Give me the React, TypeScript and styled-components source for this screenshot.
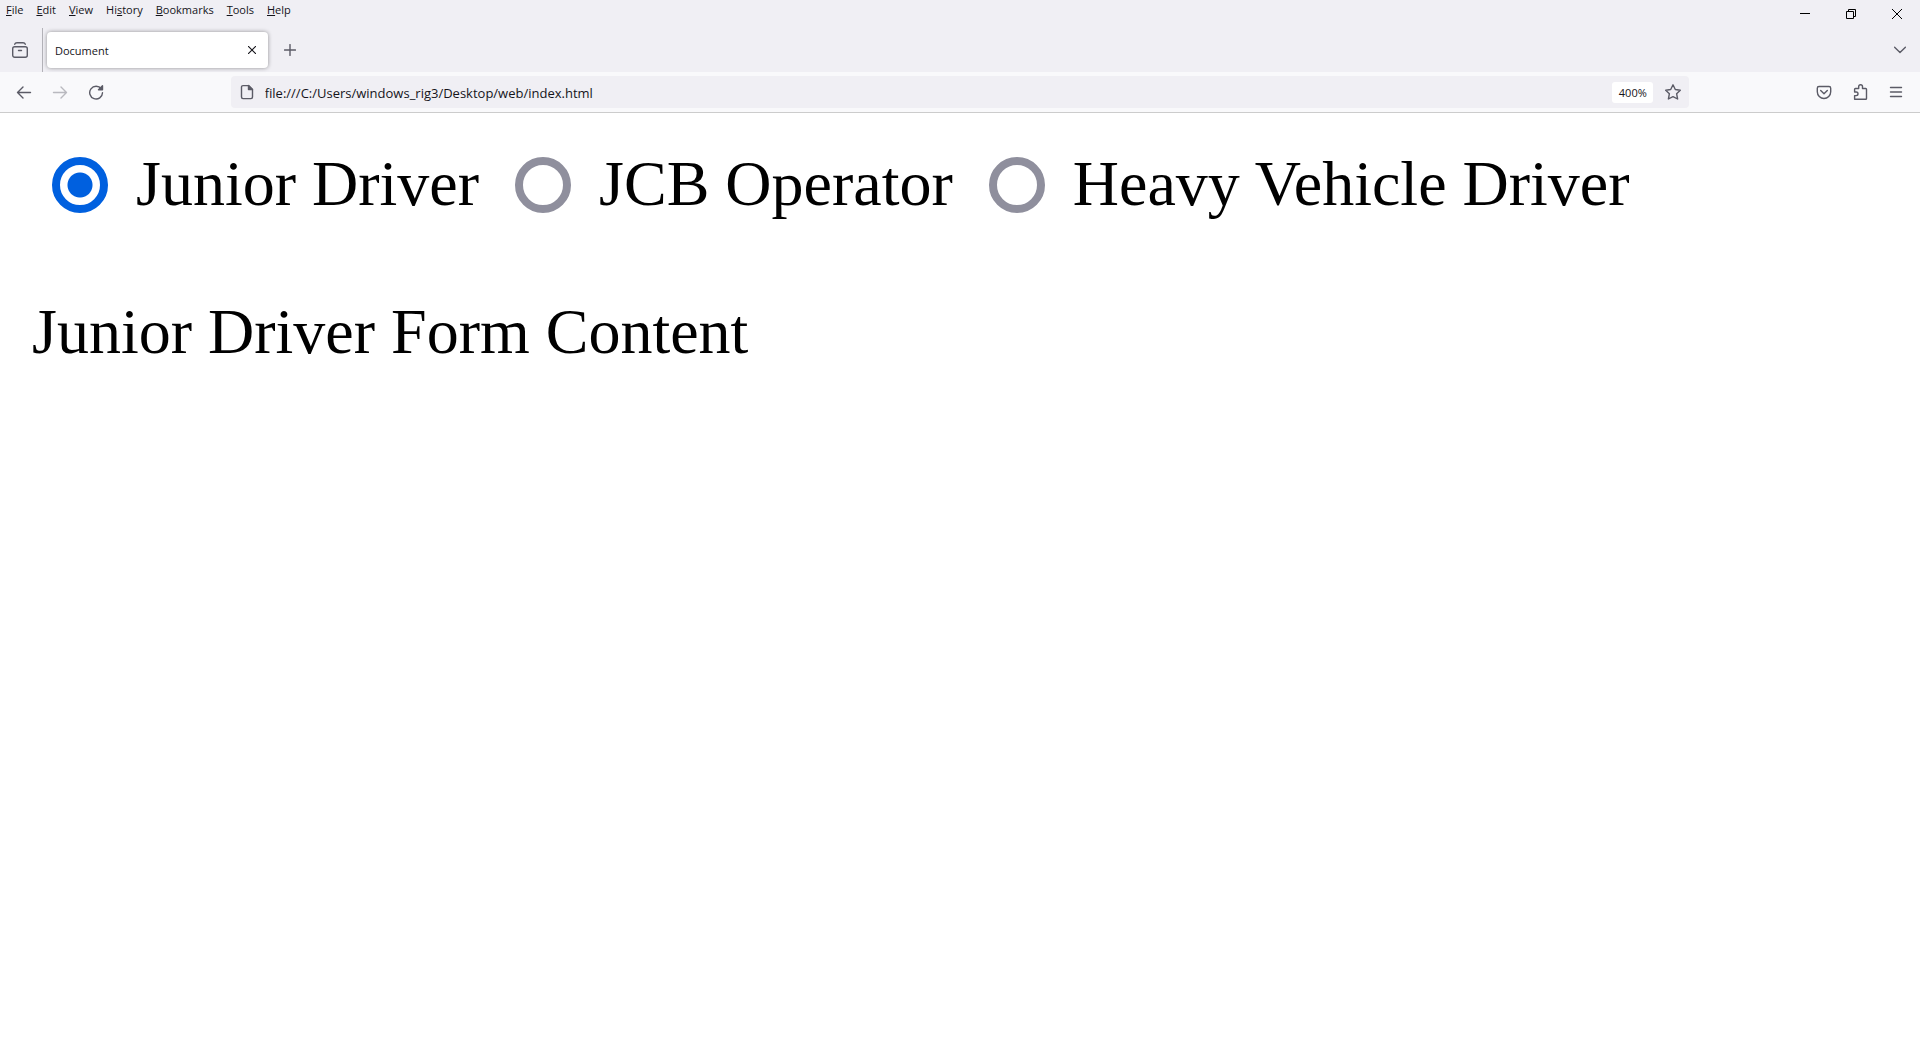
import React, { useState } from "react";
import styled, { createGlobalStyle, css } from "styled-components";

const GlobalStyle = createGlobalStyle`
  *, *::before, *::after { box-sizing: border-box; }
  body {
    margin: 0;
    background: #ffffff;
    color: #000000;
  }
  button { font: inherit; color: inherit; }
`;

const uiFont = `"Open Sans", "Noto Sans", sans-serif`;

const Window = styled.div`
  display: flex;
  flex-direction: column;
  min-height: 100vh;
`;

const Chrome = styled.header`
  background: #f0eff4;
  border-bottom: 1px solid #cccccc;
  font-family: ${uiFont};
  font-size: 11px;
  color: #15141a;
`;

const TitleRow = styled.div`
  display: flex;
  justify-content: space-between;
  align-items: flex-start;
  height: 28px;
`;

const MenuBar = styled.nav`
  display: flex;
  gap: 1px;
`;

const MenuButton = styled.button`
  border: 0;
  background: none;
  padding: 0 6px;
  line-height: 20px;
`;

const WindowControls = styled.div`
  display: flex;
`;

const iconButton = css`
  display: flex;
  align-items: center;
  justify-content: center;
  flex: none;
  padding: 0;
  border: 0;
  background: none;
  color: #5b5b66;
`;

const ControlButton = styled.button`
  ${iconButton}
  width: 46px;
  height: 28px;
  color: #000000;
`;

const TabRow = styled.div`
  display: flex;
  align-items: center;
  height: 44px;
`;

const TabRowEnd = styled.div`
  display: flex;
  margin-left: auto;
  padding-right: 2px;
`;

const ViewSection = styled.div`
  display: flex;
  align-self: stretch;
  align-items: center;
  width: 43px;
  padding-left: 2px;
  border-right: 1px solid #b3b2b8;
`;

const IconButton = styled.button<{ $faded?: boolean; $width?: number }>`
  ${iconButton}
  width: ${(p) => p.$width ?? 36}px;
  height: 32px;
  opacity: ${(p) => (p.$faded ? 0.4 : 1)};
`;

const Tab = styled.div`
  display: flex;
  align-items: center;
  justify-content: space-between;
  width: 221px;
  height: 36px;
  margin: 0 4px;
  padding: 0 4px 0 8px;
  border-radius: 4px;
  background: #ffffff;
  box-shadow: 0 0 4px rgba(0, 0, 0, 0.4);
`;

const TabClose = styled.button`
  ${iconButton}
  width: 24px;
  height: 24px;
  color: #15141a;
`;

const NavBar = styled.div`
  display: flex;
  align-items: center;
  height: 40px;
  padding: 0 6px;
  background: #f9f9fb;
`;

const Spring = styled.div`
  flex: 8 1 0;
`;

const UrlBar = styled.form`
  display: flex;
  align-items: center;
  flex: 100 1 0;
  height: 32px;
  border-radius: 4px;
  background: #f0eff4;
`;

const PageIcon = styled.span`
  display: flex;
  justify-content: center;
  width: 32px;
  color: #5b5b66;
`;

const UrlInput = styled.input`
  flex: 1;
  min-width: 0;
  height: 32px;
  padding: 2px 0 0 2px;
  border: 0;
  outline: 0;
  background: none;
  color: #15141a;
  font-family: ${uiFont};
  font-size: 13px;
`;

const ZoomButton = styled.button`
  width: 41px;
  height: 21px;
  margin-right: 4px;
  padding: 0;
  border: 0;
  border-radius: 3px;
  background: #ffffff;
  line-height: 21px;
`;

const Page = styled.main`
  padding: 34px 32px;
  font-family: "Liberation Serif", "Times New Roman", serif;
  font-size: 64px;
  line-height: 74px;
`;

const Choices = styled.div`
  display: flex;
  flex-wrap: wrap;
  gap: 16px;
`;

const Choice = styled.label`
  display: flex;
  align-items: center;
  gap: 28px;
  padding-left: 20px;
`;

const Radio = styled.input`
  appearance: none;
  flex: none;
  width: 56px;
  height: 56px;
  margin: 2px 0 0;
  border: 8px solid #8f8f9d;
  border-radius: 50%;
  background: #ffffff;

  &:checked {
    border-color: #0060df;
    background: radial-gradient(circle, #0060df 12px, #ffffff 13px);
  }
`;

const FormContent = styled.section`
  margin-top: 74px;
`;

type IconProps = { size?: number; children: React.ReactNode };

const Icon = ({ size = 16, children }: IconProps) => (
  <svg
    width={size}
    height={size}
    viewBox={`0 0 ${size} ${size}`}
    fill="none"
    stroke="currentColor"
    strokeWidth="1.4"
    strokeLinecap="round"
    strokeLinejoin="round"
    aria-hidden="true"
  >
    {children}
  </svg>
);

const menus = [
  { name: "File", key: 0 },
  { name: "Edit", key: 0 },
  { name: "View", key: 0 },
  { name: "History", key: 2 },
  { name: "Bookmarks", key: 0 },
  { name: "Tools", key: 0 },
  { name: "Help", key: 0 },
];

const vehicles = ["Junior Driver", "JCB Operator", "Heavy Vehicle Driver"];

export default function App() {
  const [selected, setSelected] = useState(vehicles[0]);
  const [url, setUrl] = useState("file:///C:/Users/windows_rig3/Desktop/web/index.html");

  return (
    <Window>
      <GlobalStyle />
      <Chrome>
        <TitleRow>
          <MenuBar>
            {menus.map(({ name, key }) => (
              <MenuButton key={name} type="button">
                {name.slice(0, key)}
                <u>{name[key]}</u>
                {name.slice(key + 1)}
              </MenuButton>
            ))}
          </MenuBar>
          <WindowControls>
            <ControlButton type="button" aria-label="Minimize">
              <svg width="10" height="10" stroke="currentColor" aria-hidden="true"><path d="M0 4.500h10" /></svg>
            </ControlButton>
            <ControlButton type="button" aria-label="Restore">
              <svg width="10" height="10" fill="none" stroke="currentColor" aria-hidden="true">
                <path d="M.5 2.500h7v7h-7zM2.500 2.500v-2h7v7h-2" />
              </svg>
            </ControlButton>
            <ControlButton type="button" aria-label="Close">
              <svg width="10" height="10" stroke="currentColor" aria-hidden="true"><path d="M0 0l10 10M10 0L0 10" /></svg>
            </ControlButton>
          </WindowControls>
        </TitleRow>

        <TabRow>
          <ViewSection>
            <IconButton type="button" aria-label="Recent browsing">
              <Icon>
                <rect x=".7" y="4.700" width="14.600" height="10.600" rx="2" />
                <path d="M2.700 2.300Q3.200 .8 5 .8h6q1.800 0 2.300 1.500M6.500 8.500h3" />
              </Icon>
            </IconButton>
          </ViewSection>
          <Tab>
            Document
            <TabClose type="button" aria-label="Close tab">
              <svg width="8" height="8" stroke="currentColor" strokeWidth="1.100" aria-hidden="true">
                <path d="M0 0l8 8M8 0L0 8" />
              </svg>
            </TabClose>
          </Tab>
          <IconButton type="button" aria-label="New tab">
            <Icon size={12}><path d="M6 .6v10.800M.6 6h10.800" /></Icon>
          </IconButton>
          <TabRowEnd>
            <IconButton type="button" aria-label="List all tabs">
              <Icon size={12}><path d="M.6 3.200L6 8.500l5.400-5.300" /></Icon>
            </IconButton>
          </TabRowEnd>
        </TabRow>

        <NavBar>
          <IconButton type="button" aria-label="Back">
            <Icon><path d="M1.500 8.500h13M7 3L1.500 8.500L7 14" /></Icon>
          </IconButton>
          <IconButton type="button" aria-label="Forward" $faded>
            <Icon><path d="M1.500 8.500h13M9 3L14.500 8.500L9 14" /></Icon>
          </IconButton>
          <IconButton type="button" aria-label="Reload">
            <Icon>
              <path d="M13.300 4.900A6.400 6.400 0 1 0 14.500 8.800" />
              <path d="M14.500 1.800v4H10.500z" fill="currentColor" />
            </Icon>
          </IconButton>
          <Spring />
          <UrlBar onSubmit={(e) => e.preventDefault()}>
            <PageIcon>
              <Icon>
                <path d="M9.500 1.600H4a1.500 1.500 0 0 0-1.500 1.500v10A1.500 1.500 0 0 0 4 14.600h8a1.500 1.500 0 0 0 1.500-1.500V5.500z" />
                <path d="M9.500 1.600v3.900h4z" fill="currentColor" />
              </Icon>
            </PageIcon>
            <UrlInput aria-label="Address" value={url} onChange={(e) => setUrl(e.target.value)} />
            <ZoomButton type="button">400%</ZoomButton>
            <IconButton type="button" aria-label="Bookmark this page" $width={32}>
              <Icon>
                <path d="M8 .8l2.300 4.700 5 .7-3.700 3.500 1 5.300L8 12.600 3.400 15l1-5.300L.7 6.200l5-.7z" />
              </Icon>
            </IconButton>
          </UrlBar>
          <Spring />
          <IconButton type="button" aria-label="Save to Pocket">
            <Icon>
              <path d="M3 2.500h10a1.700 1.700 0 0 1 1.700 1.700v3.600a6.700 6.700 0 0 1-13.400 0V4.200A1.700 1.700 0 0 1 3 2.500z" />
              <path d="M4.700 6.500L8 9.700l3.300-3.200" />
            </Icon>
          </IconButton>
          <IconButton type="button" aria-label="Extensions">
            <Icon>
              <path d="M2.600 15.200V11.600h1.600a1.800 1.800 0 0 0 0-3.600H2.600V5.300q0-.8.800-.8h3.300V2.600a1.900 1.900 0 0 1 3.800 0v1.900h3.200q.8 0 .8.800v9.100q0 .8-.8.800z" />
            </Icon>
          </IconButton>
          <IconButton type="button" aria-label="Open application menu">
            <Icon><path d="M2.500 3.500h11M2.500 8h11M2.500 12.500h11" /></Icon>
          </IconButton>
        </NavBar>
      </Chrome>

      <Page>
        <Choices role="radiogroup">
          {vehicles.map((name) => (
            <Choice key={name}>
              <Radio
                type="radio"
                name="vehicle"
                checked={selected === name}
                onChange={() => setSelected(name)}
              />
              {name}
            </Choice>
          ))}
        </Choices>
        <FormContent>{selected} Form Content</FormContent>
      </Page>
    </Window>
  );
}
